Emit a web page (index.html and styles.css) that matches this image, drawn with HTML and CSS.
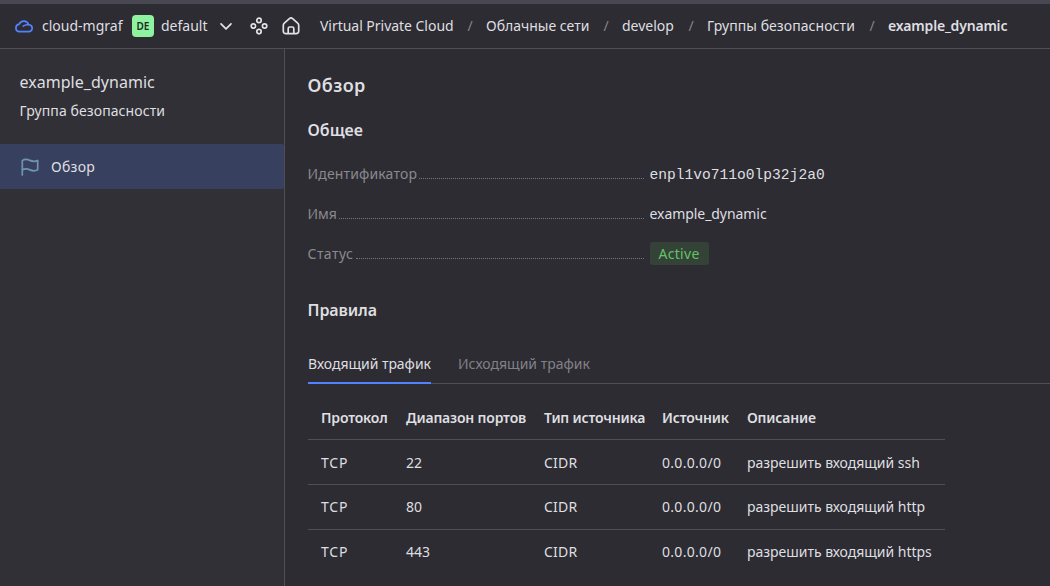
FILE: index.html
```html
<!DOCTYPE html>
<html lang="ru">
<head>
<meta charset="utf-8">
<title>example_dynamic</title>
<link rel="stylesheet" href="styles.css">
</head>
<body>
<div class="app">
  <div class="strip"></div>
  <header class="header">
    <svg class="icon-cloud" width="20" height="16" viewBox="0 0 20 16"><path d="M5 13.700h9.800a3.500 3.500 0 0 0 1.300-6.700c-.5-.2-1-.3-1.500-.3A5 5 0 0 0 5.200 6.200 3.800 3.800 0 0 0 5 13.700zM9.300 8.200q1.700-1.700 4.600-1.400"/></svg>
    <span class="cloud-name">cloud-mgraf</span>
    <span class="badge">DE</span>
    <span class="folder-name">default</span>
    <svg class="icon-chevron" width="14" height="9" viewBox="0 0 14 9"><path d="M2 1.800 7 6.800l5-5"/></svg>
    <svg class="icon-services" width="18" height="18" viewBox="0 0 18 18"><circle cx="9" cy="3.400" r="2.200"/><circle cx="3.400" cy="9" r="2.200"/><circle cx="14.600" cy="9" r="2.200"/><circle cx="9" cy="14.600" r="2.200"/></svg>
    <svg class="icon-home" width="18" height="18" viewBox="0 0 18 18"><path d="M1.300 8.200c0-.9.400-1.600 1-2.100L7.400 1.600a2.400 2.400 0 0 1 3.200 0l5.100 4.500c.6.500 1 1.200 1 2.100v6a2.500 2.500 0 0 1-2.500 2.500H3.800a2.500 2.500 0 0 1-2.500-2.500zM6.200 16.500v-5a1.500 1.500 0 0 1 1.500-1.500h2.600a1.500 1.500 0 0 1 1.500 1.500v5"/></svg>
    <nav class="crumbs">
      <span class="crumb c1">Virtual Private Cloud</span><span class="sep">/</span>
      <span class="crumb c2">Облачные сети</span><span class="sep">/</span>
      <span class="crumb c3">develop</span><span class="sep">/</span>
      <span class="crumb c4">Группы безопасности</span><span class="sep">/</span>
      <span class="crumb current">example_dynamic</span>
    </nav>
  </header>
  <div class="body">
    <aside class="sidebar">
      <div class="side-title">example_dynamic</div>
      <div class="side-sub">Группа безопасности</div>
      <a class="side-item">
        <svg class="icon-flag" width="18" height="18" viewBox="0 0 18 18"><path d="M1.300 17V2.600c2.500-1.900 5-1.500 7.700-.2 2.700 1.200 5 1.300 7.700 0v9.400c-2.700 1.500-5 1.300-7.700.1-2.700-1.200-5.200-1.400-7.700 0"/></svg>
        <span class="side-label">Обзор</span>
      </a>
    </aside>
    <main class="main">
      <h1 class="title">Обзор</h1>
      <h2 class="subtitle general">Общее</h2>
      <div class="props">
        <div class="prop"><div class="key"><span class="k1">Идентификатор</span><i class="dots"></i></div><span class="mono">enpl1vo711o0lp32j2a0</span></div>
        <div class="prop"><div class="key"><span class="k2">Имя</span><i class="dots"></i></div><span class="name">example_dynamic</span></div>
        <div class="prop"><div class="key"><span class="k3">Статус</span><i class="dots"></i></div><span class="status">Active</span></div>
      </div>
      <h2 class="subtitle rules">Правила</h2>
      <div class="tabs">
        <span class="tab active">Входящий трафик</span>
        <span class="tab">Исходящий трафик</span>
      </div>
      <div class="table">
        <div class="row head"><span>Протокол</span><span>Диапазон портов</span><span>Тип источника</span><span>Источник</span><span>Описание</span></div>
        <div class="row first"><span class="proto">TCP</span><span>22</span><span class="cidr">CIDR</span><span class="ip">0.0.0.0/0</span><span>разрешить входящий ssh</span></div>
        <div class="row"><span class="proto">TCP</span><span>80</span><span class="cidr">CIDR</span><span class="ip">0.0.0.0/0</span><span>разрешить входящий http</span></div>
        <div class="row"><span class="proto">TCP</span><span>443</span><span class="cidr">CIDR</span><span class="ip">0.0.0.0/0</span><span>разрешить входящий https</span></div>
      </div>
    </main>
  </div>
</div>
</body>
</html>
```
FILE: styles.css
```css
* { box-sizing: border-box; }
body { margin: 0; background: #2d2c33; color: #dfdfe0; font: 14px/20px "Noto Sans", "Open Sans", sans-serif; white-space: nowrap; }
svg { fill: none; stroke: #e2e2e3; stroke-width: 1.7; stroke-linecap: round; stroke-linejoin: round; display: block; flex: none; }
.app { width: 1050px; height: 586px; overflow: hidden; display: flex; flex-direction: column; }
.strip { height: 4px; background: #484852; flex: none; }
.header { height: 45px; flex: none; border-bottom: 1px solid #504f55; display: flex; align-items: center; padding-left: 14px; }
.icon-cloud { stroke: #5282ff; }
.cloud-name { width: 81px; margin-left: 8px; }
.badge { width: 22px; height: 22px; margin-left: 9px; border-radius: 4px; background: #8ff2a1; color: #1c2a20; font-size: 10px; font-weight: 600; line-height: 22px; text-align: center; }
.folder-name { width: 47px; margin-left: 7px; }
.icon-chevron { margin-left: 11px; }
.icon-services { margin-left: 17px; }
.icon-home { margin-left: 14px; }
.crumbs { display: flex; margin-left: 20px; }
.c1 { width: 134px; letter-spacing: -.03px; }
.c2 { width: 104px; }
.c3 { width: 53px; }
.c4 { width: 149px; letter-spacing: .07px; }
.sep { width: 32px; text-align: center; color: #85848a; }
.current { font-weight: 600; letter-spacing: -.2px; }
.body { flex: 1; display: flex; min-height: 0; }
.sidebar { width: 285px; flex: none; background: #313036; border-right: 1px solid #504f55; padding-top: 21px; }
.side-title { padding-left: 19.500px; font-size: 16px; line-height: 24px; letter-spacing: .03px; }
.side-sub { padding-left: 19.500px; margin-top: 7px; letter-spacing: .1px; }
.side-item { margin-top: 23px; height: 45px; background: #38405f; display: flex; align-items: center; gap: 12px; padding-left: 21px; border-radius: 0 2px 2px 0; }
.side-label { letter-spacing: .3px; }
.icon-flag { stroke: #6f95b0; }
.main { flex: 1; min-width: 0; padding: 24px 0 0 23px; display: flex; flex-direction: column; }
.title { margin: 0 0 0 -.5px; font-size: 18px; line-height: 24px; font-weight: 600; letter-spacing: .4px; }
.subtitle { margin: 0 0 0 -.5px; font-size: 16px; line-height: 24px; font-weight: 600; }
.general { margin-top: 21px; }
.props { margin: 12px 0 0 -.5px; }
.prop { height: 40px; display: flex; align-items: center; }
.key { width: 342px; padding-right: 6px; display: flex; align-items: baseline; color: #8a898e; }
.k1 { width: 109px; letter-spacing: .15px; }
.k2 { width: 29px; }
.k3 { width: 46px; letter-spacing: .45px; }
.dots { flex: 1; margin-left: 2px; border-bottom: 1px dotted #77767b; }
.mono { font: 14.6px/20px "Liberation Mono", monospace; padding-top: 2px; }
.name { letter-spacing: -.06px; }
.status { width: 59px; height: 23px; margin-bottom: 1px; padding-left: 9px; border-radius: 3px; background: #354238; color: #62c467; line-height: 23px; letter-spacing: .3px; }
.rules { margin-top: 24px; letter-spacing: -.1px; }
.tabs { height: 40px; margin-top: 22px; border-bottom: 1px solid #504f55; display: flex; gap: 27px; color: #828187; }
.tab { height: 40px; line-height: 40px; }
.active { width: 123px; color: #dfdfe0; border-bottom: 2px solid #5282ff; letter-spacing: -.03px; }
.table { width: 637px; margin-top: 12px; }
.row { display: grid; grid-template-columns: 85px 138px 118px 85px 1fr; height: 45px; line-height: 43px; padding-left: 13px; border-bottom: 1px solid #504f55; letter-spacing: -.02px; }
.row:last-child { border-bottom: 0; }
.first { line-height: 45px; }
.head { height: 44px; line-height: 44px; font-weight: 600; letter-spacing: -.17px; }
.proto { letter-spacing: .8px; }
.cidr { letter-spacing: .2px; }
.ip { letter-spacing: .3px; }
```
